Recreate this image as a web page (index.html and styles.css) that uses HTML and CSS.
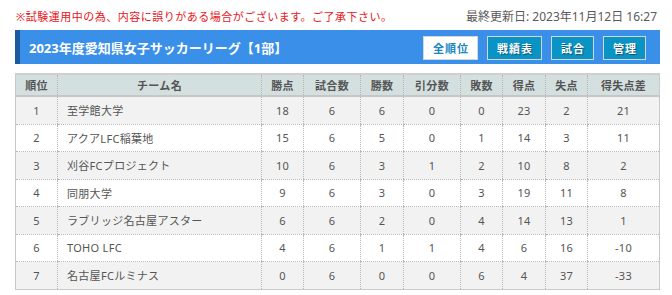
FILE: index.html
```html
<!DOCTYPE html>
<html lang="ja">
<head>
<meta charset="utf-8">
<link rel="stylesheet" href="styles.css">
</head>
<body>
<div class="page">
  <div class="topline">
    <p class="notice">※試験運用中の為、内容に誤りがある場合がございます。ご了承下さい。</p>
    <p class="updated">最終更新日: 2023年11月12日 16:27</p>
  </div>
  <div class="titlebar">
    <h1 class="title">2023年度愛知県女子サッカーリーグ【1部】</h1>
    <nav class="btns">
      <span class="btn btn-active">全順位</span>
      <span class="btn">戦績表</span>
      <span class="btn">試合</span>
      <span class="btn">管理</span>
    </nav>
  </div>
  <table class="standings">
    <colgroup>
      <col class="c-rank"><col class="c-team"><col class="c-pts"><col class="c-gp"><col class="c-w"><col class="c-d"><col class="c-l"><col class="c-gf"><col class="c-ga"><col class="c-gd">
    </colgroup>
    <thead>
      <tr><th>順位</th><th>チーム名</th><th>勝点</th><th>試合数</th><th>勝数</th><th>引分数</th><th>敗数</th><th>得点</th><th>失点</th><th>得失点差</th></tr>
    </thead>
    <tbody>
      <tr><td>1</td><td class="team">至学館大学</td><td>18</td><td>6</td><td>6</td><td>0</td><td>0</td><td>23</td><td>2</td><td>21</td></tr>
      <tr><td>2</td><td class="team">アクアLFC稲葉地</td><td>15</td><td>6</td><td>5</td><td>0</td><td>1</td><td>14</td><td>3</td><td>11</td></tr>
      <tr><td>3</td><td class="team">刈谷FCプロジェクト</td><td>10</td><td>6</td><td>3</td><td>1</td><td>2</td><td>10</td><td>8</td><td>2</td></tr>
      <tr><td>4</td><td class="team">同朋大学</td><td>9</td><td>6</td><td>3</td><td>0</td><td>3</td><td>19</td><td>11</td><td>8</td></tr>
      <tr><td>5</td><td class="team">ラブリッジ名古屋アスター</td><td>6</td><td>6</td><td>2</td><td>0</td><td>4</td><td>14</td><td>13</td><td>1</td></tr>
      <tr><td>6</td><td class="team">TOHO LFC</td><td>4</td><td>6</td><td>1</td><td>1</td><td>4</td><td>6</td><td>16</td><td>-10</td></tr>
      <tr><td>7</td><td class="team">名古屋FCルミナス</td><td>0</td><td>6</td><td>0</td><td>0</td><td>6</td><td>4</td><td>37</td><td>-33</td></tr>
    </tbody>
  </table>
</div>
</body>
</html>
```

FILE: styles.css
```css
html, body {
  margin: 0;
  padding: 0;
  background: #fff;
}
body {
  font-family: "Noto Sans", "Noto Sans CJK JP", sans-serif;
  color: #555;
}
.page {
  padding: 0 12px 0 15px;
}
.topline {
  display: flex;
  justify-content: space-between;
  align-items: center;
  height: 30px;
  padding: 2px 3px 0 1px;
  box-sizing: border-box;
}
.notice {
  margin: 0;
  color: #e8141b;
  font-size: 11px;
  letter-spacing: 0.5px;
}
.updated {
  margin: 0;
  color: #5a5a5a;
  font-size: 12px;
}
.titlebar {
  display: flex;
  align-items: center;
  justify-content: space-between;
  height: 34px;
  background: #3a90e8;
  border-left: 5px solid #1b5a9c;
  padding: 0 14px 0 9px;
}
.title {
  margin: 0;
  color: #fff;
  font-size: 13px;
  font-weight: bold;
}
.btns {
  display: flex;
  gap: 9px;
  padding-top: 1px;
}
.btn {
  display: flex;
  align-items: center;
  height: 24px;
  box-sizing: border-box;
  padding: 0 8px 0 9px;
  border: 1px solid #d6d6d6;
  background: #0a94c6;
  color: #fff;
  font-size: 11px;
  font-weight: bold;
  letter-spacing: 1px;
  text-shadow: 1px 1px 1px rgba(0,0,0,0.45);
}
.btn-active {
  background: #fff;
  color: #1a86c2;
  text-shadow: none;
}
.standings {
  width: 100%;
  margin-top: 9px;
  border-collapse: collapse;
  border: 1px solid #c9c9c9;
  border-top: 2px solid #cfcfcf;
  font-size: 11px;
  letter-spacing: 0.3px;
  table-layout: fixed;
}
.c-rank { width: 42px; }
.c-team { width: 204px; }
.c-pts { width: 42px; }
.c-gp { width: 57px; }
.c-w { width: 43px; }
.c-d { width: 57px; }
.c-l { width: 42px; }
.c-gf { width: 43px; }
.c-ga { width: 42px; }
.c-gd { width: auto; }
.standings th {
  height: 20px;
  background: #d4dfe0;
  color: #555;
  font-weight: 600;
  border-bottom: 2px solid #c6c6c6;
  border-left: 1px dotted #b5b5b5;
  padding: 0;
}
.standings th:first-child,
.standings td:first-child {
  border-left: none;
}
.standings td {
  height: 26.5px;
  padding: 0;
  text-align: center;
  border-left: 1px dotted #b8b8b8;
  border-bottom: 1px dotted #b8b8b8;
  color: #555;
}
.standings td.team {
  text-align: left;
  padding-left: 9px;
}
.standings tbody tr:nth-child(odd) {
  background: #f2f2f2;
}
.standings tbody tr:nth-child(even) {
  background: #fff;
}
```
